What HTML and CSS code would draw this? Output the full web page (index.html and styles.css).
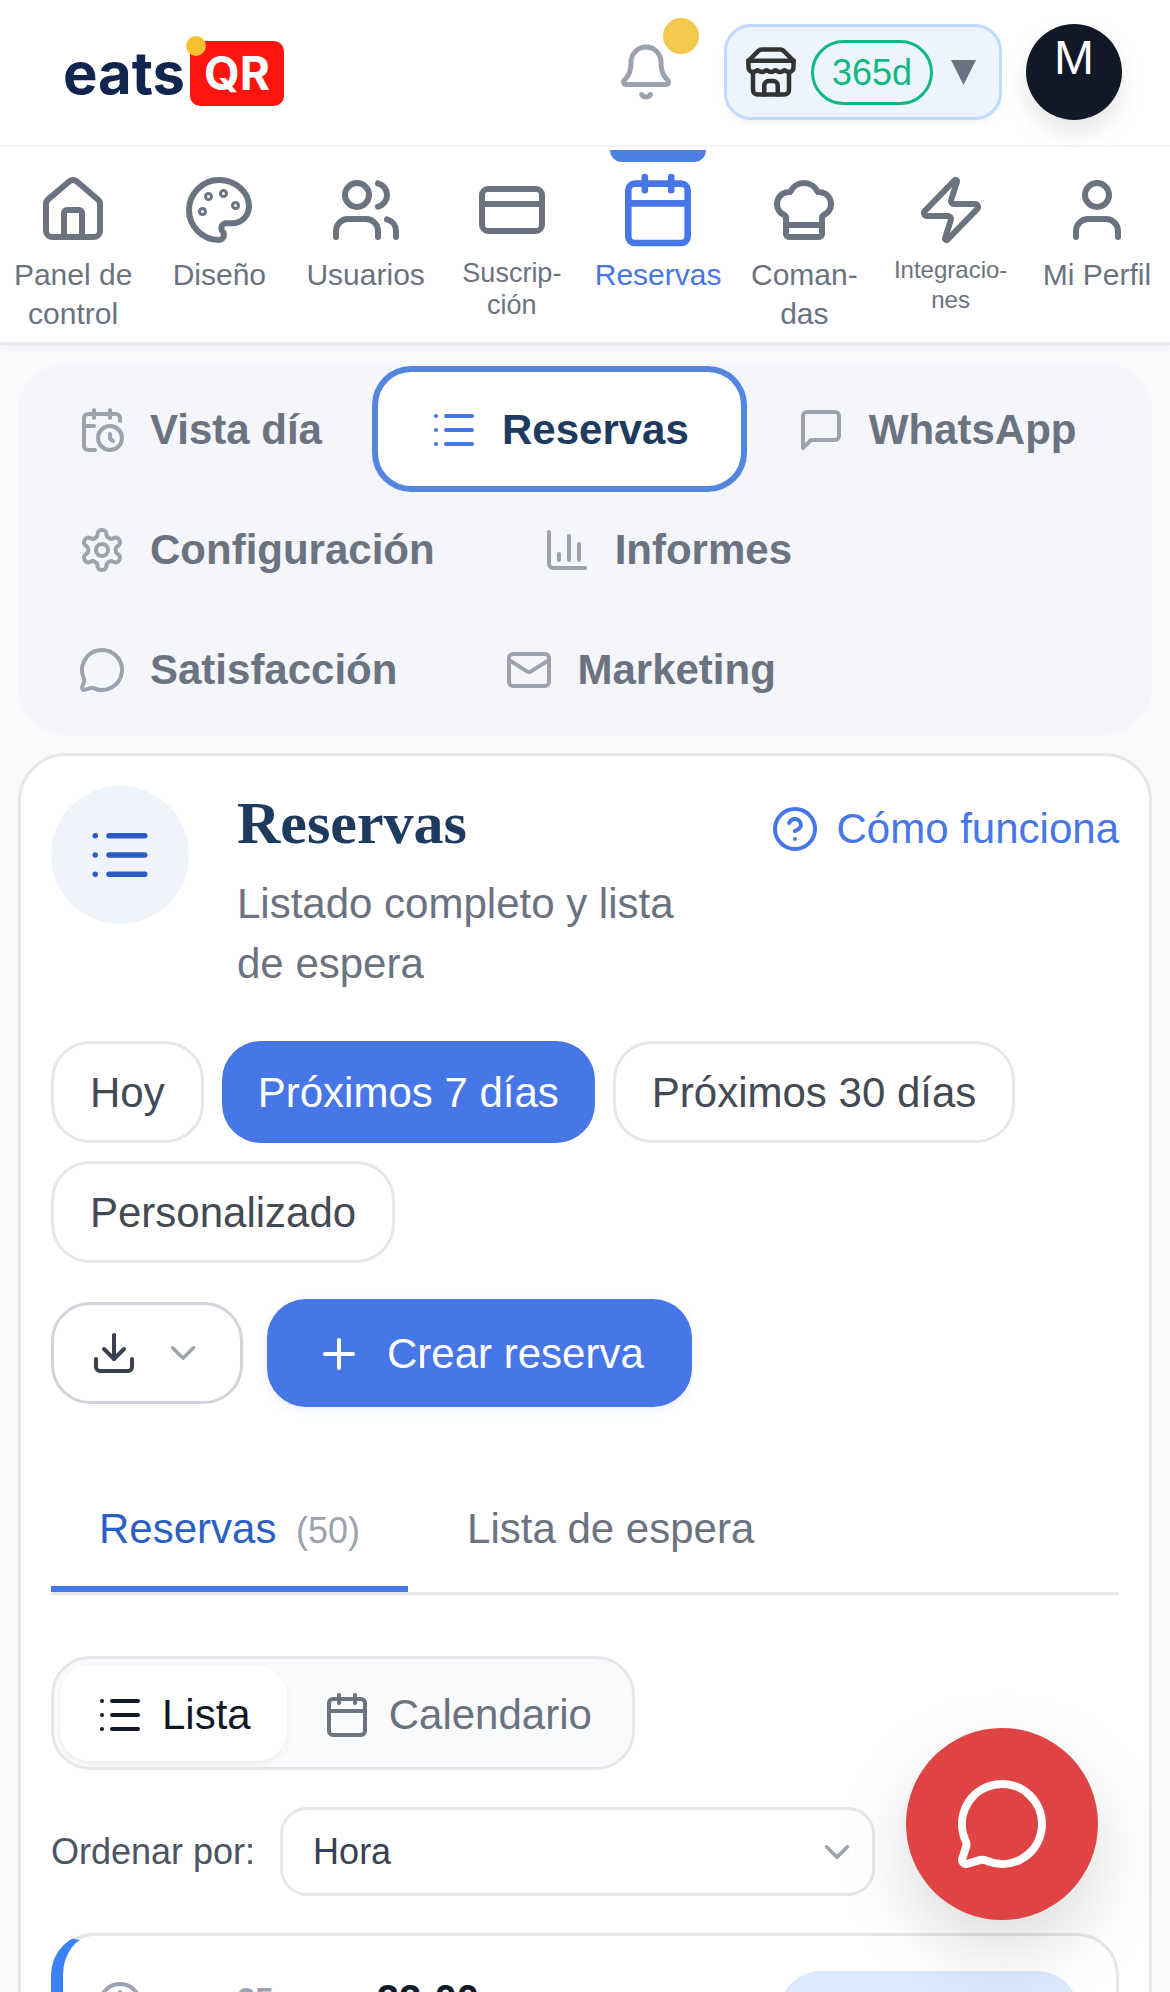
FILE: index.html
```html
<!DOCTYPE html>
<html lang="es">
<head>
  <meta charset="UTF-8">
  <title>Reservas - eatsQR</title>
  <link rel="stylesheet" href="styles.css">
</head>
<body>
  <header class="topbar">
    <div class="logo">
      <span class="logo-eats">eats</span>
      <span class="logo-qr">QR</span>
      <span class="logo-dot"></span>
    </div>
    <div class="topbar-right">
      <div class="bell">
        <svg class="ico" width="60" height="60" viewBox="0 0 24 24"><path d="M10.268 21a2 2 0 0 0 3.464 0"/><path d="M3.262 15.326A1 1 0 0 0 4 17h16a1 1 0 0 0 .74-1.673C19.41 13.956 18 12.499 18 8A6 6 0 0 0 6 8c0 4.499-1.411 5.956-2.738 7.326"/></svg>
        <span class="bell-dot"></span>
      </div>
      <div class="plan">
        <svg class="ico" width="54" height="54" viewBox="0 0 24 24"><path d="m2 7 4.41-4.41A2 2 0 0 1 7.83 2h8.34a2 2 0 0 1 1.42.59L22 7"/><path d="M4 12v8a2 2 0 0 0 2 2h12a2 2 0 0 0 2-2v-8"/><path d="M15 22v-4a2 2 0 0 0-2-2h-2a2 2 0 0 0-2 2v4"/><path d="M2 7h20"/><path d="M22 7v3a2 2 0 0 1-2 2a2.7 2.7 0 0 1-1.59-.63.7.7 0 0 0-.82 0A2.7 2.7 0 0 1 16 12a2.7 2.7 0 0 1-1.59-.63.7.7 0 0 0-.82 0A2.7 2.7 0 0 1 12 12a2.7 2.7 0 0 1-1.59-.63.7.7 0 0 0-.82 0A2.7 2.7 0 0 1 8 12a2.7 2.7 0 0 1-1.59-.63.7.7 0 0 0-.82 0A2.7 2.7 0 0 1 4 12a2 2 0 0 1-2-2V7"/></svg>
        <span class="plan-days">365d</span>
        <svg class="plan-arrow" width="25" height="25" viewBox="0 0 25 25"><polygon points="0,0 25,0 12.5,25"/></svg>
      </div>
      <div class="avatar">M</div>
    </div>
  </header>

  <nav class="mainnav">
    <a class="nav-item">
      <svg class="ico" width="72" height="72" viewBox="0 0 24 24"><path d="M15 21v-8a1 1 0 0 0-1-1h-4a1 1 0 0 0-1 1v8"/><path d="M3 10a2 2 0 0 1 .709-1.528l7-5.999a2 2 0 0 1 2.582 0l7 5.999A2 2 0 0 1 21 10v9a2 2 0 0 1-2 2H5a2 2 0 0 1-2-2z"/></svg>
      <span class="nav-label">Panel de control</span>
    </a>
    <a class="nav-item">
      <svg class="ico" width="72" height="72" viewBox="0 0 24 24"><path d="M12 2C6.5 2 2 6.5 2 12s4.5 10 10 10c.926 0 1.648-.746 1.648-1.688 0-.437-.18-.835-.437-1.125-.29-.289-.438-.652-.438-1.125a1.64 1.64 0 0 1 1.668-1.668h1.996c3.051 0 5.555-2.503 5.555-5.554C21.965 6.012 17.461 2 12 2z"/><circle cx="13.5" cy="6.5" r=".5"/><circle cx="17.5" cy="10.5" r=".5"/><circle cx="8.5" cy="7.5" r=".5"/><circle cx="6.5" cy="12.5" r=".5"/></svg>
      <span class="nav-label">Diseño</span>
    </a>
    <a class="nav-item">
      <svg class="ico" width="72" height="72" viewBox="0 0 24 24"><path d="M16 21v-2a4 4 0 0 0-4-4H6a4 4 0 0 0-4 4v2"/><circle cx="9" cy="7" r="4"/><path d="M22 21v-2a4 4 0 0 0-3-3.87"/><path d="M16 3.13a4 4 0 0 1 0 7.75"/></svg>
      <span class="nav-label">Usuarios</span>
    </a>
    <a class="nav-item">
      <svg class="ico" width="72" height="72" viewBox="0 0 24 24"><rect x="2" y="5" width="20" height="14" rx="2"/><path d="M2 10h20"/></svg>
      <span class="nav-label nav-label-sm">Suscrip-<br>ción</span>
    </a>
    <a class="nav-item active">
      <span class="nav-mark"></span>
      <svg class="ico" width="72" height="72" viewBox="0 0 24 24"><path d="M8 2v4"/><path d="M16 2v4"/><rect x="3" y="4" width="18" height="18" rx="2"/><path d="M3 10h18"/></svg>
      <span class="nav-label">Reservas</span>
    </a>
    <a class="nav-item">
      <svg class="ico" width="72" height="72" viewBox="0 0 24 24"><path d="M17 21a1 1 0 0 0 1-1v-5.35c0-.457.316-.844.727-1.041a4 4 0 0 0-2.134-7.589 5 5 0 0 0-9.186 0 4 4 0 0 0-2.134 7.588c.411.198.727.585.727 1.041V20a1 1 0 0 0 1 1Z"/><path d="M6 17h12"/></svg>
      <span class="nav-label">Coman-<br>das</span>
    </a>
    <a class="nav-item">
      <svg class="ico" width="72" height="72" viewBox="0 0 24 24"><path d="M4 14a1 1 0 0 1-.78-1.63l9.9-10.2a.5.5 0 0 1 .86.46l-1.92 6.02A1 1 0 0 0 13 10h7a1 1 0 0 1 .78 1.63l-9.9 10.2a.5.5 0 0 1-.86-.46l1.92-6.02A1 1 0 0 0 11 14z"/></svg>
      <span class="nav-label nav-label-xs">Integracio-<br>nes</span>
    </a>
    <a class="nav-item">
      <svg class="ico" width="72" height="72" viewBox="0 0 24 24"><path d="M19 21v-2a4 4 0 0 0-4-4H9a4 4 0 0 0-4 4v2"/><circle cx="12" cy="7" r="4"/></svg>
      <span class="nav-label">Mi Perfil</span>
    </a>
  </nav>

  <main class="content">
    <div class="section-tabs">
      <a class="section-tab">
        <svg class="ico-thin" width="48" height="48" viewBox="0 0 24 24"><path d="M21 7.5V6a2 2 0 0 0-2-2H5a2 2 0 0 0-2 2v14a2 2 0 0 0 2 2h3.5"/><path d="M16 2v4"/><path d="M8 2v4"/><path d="M3 10h5"/><path d="M17.5 17.5 16 16.3V14"/><circle cx="16" cy="16" r="6"/></svg>
        Vista día
      </a>
      <a class="section-tab active">
        <svg class="ico-thin" width="48" height="48" viewBox="0 0 24 24"><path d="M3 5h.01M3 12h.01M3 19h.01M8 5h13M8 12h13M8 19h13"/></svg>
        Reservas
      </a>
      <a class="section-tab">
        <svg class="ico-thin" width="48" height="48" viewBox="0 0 24 24"><path d="M21 15a2 2 0 0 1-2 2H7l-4 4V5a2 2 0 0 1 2-2h14a2 2 0 0 1 2 2z"/></svg>
        WhatsApp
      </a>
      <a class="section-tab">
        <svg class="ico-thin" width="48" height="48" viewBox="0 0 24 24"><path d="M12.22 2h-.44a2 2 0 0 0-2 2v.18a2 2 0 0 1-1 1.73l-.43.25a2 2 0 0 1-2 0l-.15-.08a2 2 0 0 0-2.73.73l-.22.38a2 2 0 0 0 .73 2.73l.15.1a2 2 0 0 1 1 1.72v.51a2 2 0 0 1-1 1.74l-.15.09a2 2 0 0 0-.73 2.73l.22.38a2 2 0 0 0 2.73.73l.15-.08a2 2 0 0 1 2 0l.43.25a2 2 0 0 1 1 1.73V20a2 2 0 0 0 2 2h.44a2 2 0 0 0 2-2v-.18a2 2 0 0 1 1-1.73l.43-.25a2 2 0 0 1 2 0l.15.08a2 2 0 0 0 2.73-.73l.22-.39a2 2 0 0 0-.73-2.73l-.15-.08a2 2 0 0 1-1-1.74v-.5a2 2 0 0 1 1-1.74l.15-.09a2 2 0 0 0 .73-2.73l-.22-.38a2 2 0 0 0-2.73-.73l-.15.08a2 2 0 0 1-2 0l-.43-.25a2 2 0 0 1-1-1.73V4a2 2 0 0 0-2-2z"/><circle cx="12" cy="12" r="3"/></svg>
        Configuración
      </a>
      <a class="section-tab">
        <svg class="ico-thin" width="48" height="48" viewBox="0 0 24 24"><path d="M3 3v16a2 2 0 0 0 2 2h16"/><path d="M18 17V9"/><path d="M13 17V5"/><path d="M8 17v-3"/></svg>
        Informes
      </a>
      <a class="section-tab">
        <svg class="ico-thin" width="48" height="48" viewBox="0 0 24 24"><path d="M2.992 16.342a2 2 0 0 1 .094 1.167l-1.065 3.29a1 1 0 0 0 1.236 1.168l3.413-.998a2 2 0 0 1 1.099.092 10 10 0 1 0-4.777-4.719"/></svg>
        Satisfacción
      </a>
      <a class="section-tab">
        <svg class="ico-thin" width="48" height="48" viewBox="0 0 24 24"><rect x="2" y="4" width="20" height="16" rx="2"/><path d="m22 7-8.97 5.7a1.94 1.94 0 0 1-2.06 0L2 7"/></svg>
        Marketing
      </a>
    </div>

    <section class="card">
      <div class="card-head">
        <div class="head-icon">
          <svg class="ico" width="66" height="66" viewBox="0 0 24 24"><path d="M3 5h.01M3 12h.01M3 19h.01M8 5h13M8 12h13M8 19h13"/></svg>
        </div>
        <div class="head-text">
          <h1>Reservas</h1>
          <p>Listado completo y lista de espera</p>
        </div>
        <a class="help-link">
          <svg class="ico" width="48" height="48" viewBox="0 0 24 24"><circle cx="12" cy="12" r="10"/><path d="M9.09 9a3 3 0 0 1 5.83 1c0 2-3 3-3 3"/><path d="M12 17h.01"/></svg>
          Cómo funciona
        </a>
      </div>

      <div class="chips">
        <button class="chip">Hoy</button>
        <button class="chip active">Próximos 7 días</button>
        <button class="chip">Próximos 30 días</button>
        <button class="chip">Personalizado</button>
      </div>

      <div class="actions">
        <button class="export-btn">
          <svg class="ico" width="48" height="48" viewBox="0 0 24 24"><path d="M12 15V3"/><path d="M21 15v4a2 2 0 0 1-2 2H5a2 2 0 0 1-2-2v-4"/><path d="m7 10 5 5 5-5"/></svg>
          <svg class="ico chevron" width="42" height="42" viewBox="0 0 24 24"><path d="m6 9 6 6 6-6"/></svg>
        </button>
        <button class="create-btn">
          <svg class="ico" width="48" height="48" viewBox="0 0 24 24"><path d="M5 12h14"/><path d="M12 5v14"/></svg>
          Crear reserva
        </button>
      </div>

      <div class="list-tabs">
        <a class="list-tab active">Reservas <span class="count">(50)</span></a>
        <a class="list-tab">Lista de espera</a>
      </div>

      <div class="view-toggle">
        <a class="view-btn active">
          <svg class="ico" width="48" height="48" viewBox="0 0 24 24"><path d="M3 5h.01M3 12h.01M3 19h.01M8 5h13M8 12h13M8 19h13"/></svg>
          Lista
        </a>
        <a class="view-btn">
          <svg class="ico" width="48" height="48" viewBox="0 0 24 24"><path d="M8 2v4"/><path d="M16 2v4"/><rect x="3" y="4" width="18" height="18" rx="2"/><path d="M3 10h18"/></svg>
          Calendario
        </a>
      </div>

      <div class="sort-row">
        <label>Ordenar por:</label>
        <div class="select">
          Hora
          <svg class="ico chevron" width="42" height="42" viewBox="0 0 24 24"><path d="m6 9 6 6 6-6"/></svg>
        </div>
      </div>

      <article class="booking">
        <svg class="ico-thin booking-clock" width="48" height="48" viewBox="0 0 24 24"><circle cx="12" cy="12" r="10"/><path d="M12 6v6l4 2"/></svg>
        <span class="booking-day">25</span>
        <span class="booking-time">22:00</span>
        <span class="booking-status"></span>
      </article>
    </section>
  </main>

  <button class="fab">
    <svg class="ico" width="96" height="96" viewBox="0 0 24 24"><path d="M2.992 16.342a2 2 0 0 1 .094 1.167l-1.065 3.29a1 1 0 0 0 1.236 1.168l3.413-.998a2 2 0 0 1 1.099.092 10 10 0 1 0-4.777-4.719"/></svg>
  </button>
</body>
</html>
```

FILE: styles.css
```css
* {
  box-sizing: border-box;
}
html, body {
  height: 1992px;
  overflow: hidden;
}
body {
  position: relative;
  margin: 0;
  font-family: "Liberation Sans", Arial, sans-serif;
  background: #f8fafc;
  color: #374151;
}
button {
  font-family: inherit;
  cursor: pointer;
}
.ico, .ico-thin {
  display: block;
  flex-shrink: 0;
  fill: none;
  stroke: currentColor;
  stroke-width: 2;
  stroke-linecap: round;
  stroke-linejoin: round;
}
.ico-thin {
  color: #9ca3af;
}

/* top bar */
.topbar {
  display: flex;
  align-items: center;
  justify-content: space-between;
  height: 147px;
  padding: 0 48px 1px 63px;
  background: #fff;
  border-bottom: 2px solid #f3f4f6;
}
.logo {
  position: relative;
  display: flex;
  align-items: center;
  gap: 5px;
  margin-top: 3px;
}
.logo-eats {
  font-family: Inter, sans-serif;
  font-size: 58px;
  font-weight: 700;
  line-height: 65px;
  color: #10264f;
}
.logo-qr {
  width: 94px;
  height: 65px;
  border-radius: 10px;
  background: #ff1510;
  color: #fff;
  font-family: Inter, sans-serif;
  font-size: 46px;
  font-weight: 700;
  line-height: 65px;
  text-align: center;
}
.logo-dot {
  position: absolute;
  left: 123px;
  top: -5px;
  width: 20px;
  height: 20px;
  border-radius: 50%;
  background: #f9c033;
}
.topbar-right {
  display: flex;
  align-items: center;
  gap: 24px;
}
.bell {
  position: relative;
  margin-right: 24px;
  color: #9ca3af;
}
.bell-dot {
  position: absolute;
  left: 47px;
  top: -24px;
  width: 36px;
  height: 36px;
  border-radius: 50%;
  background: #f2c94c;
}
.plan {
  display: flex;
  align-items: center;
  width: 278px;
  height: 96px;
  padding-left: 17px;
  border: 3px solid #bfdbfe;
  border-radius: 27px;
  background: #eef4fe;
  color: #333;
  box-shadow: 0 3px 6px rgba(0, 0, 0, 0.05);
}
.plan-days {
  width: 122px;
  height: 65px;
  margin: 0 18px 0 13px;
  border: 3px solid #10b981;
  border-radius: 33px;
  color: #10b981;
  font-size: 36px;
  line-height: 59px;
  text-align: center;
}
.plan-arrow {
  fill: #6b7280;
}
.avatar {
  display: flex;
  justify-content: center;
  width: 96px;
  height: 96px;
  border-radius: 50%;
  background: #111827;
  color: #fff;
  font-size: 48px;
  line-height: 68px;
  box-shadow: 0 12px 24px rgba(0, 0, 0, 0.1);
}

/* main navigation */
.mainnav {
  position: relative;
  display: flex;
  height: 198px;
  padding-top: 27px;
  background: #fff;
  border-bottom: 3px solid #e8eaed;
  box-shadow: 0 3px 6px rgba(0, 0, 0, 0.04);
}
.nav-item {
  flex: 1;
  display: flex;
  flex-direction: column;
  align-items: center;
  position: relative;
  color: #6b7280;
  text-align: center;
}
.nav-label {
  margin-top: 9px;
  font-size: 30px;
  line-height: 39px;
}
.nav-label-sm {
  margin-top: 11px;
  font-size: 27px;
  line-height: 32px;
}
.nav-label-xs {
  margin-top: 9px;
  font-size: 24px;
  line-height: 30px;
}
.nav-item.active {
  color: #4776e6;
}
.nav-item.active .ico {
  transform: scale(1.1);
}
.nav-mark {
  position: absolute;
  top: -24px;
  left: 25px;
  width: 96px;
  height: 12px;
  border-radius: 0 0 12px 12px;
  background: #4f81e3;
}

/* section tabs */
.content {
  padding: 19px 18px 18px;
}
.section-tabs {
  display: flex;
  flex-wrap: wrap;
  gap: 6px 4px;
  height: 371px;
  padding: 8px 0 9px 8px;
  border-radius: 48px;
  background: #f4f6fb;
}
.section-tab {
  display: flex;
  align-items: center;
  gap: 24px;
  height: 114px;
  padding: 2px 52px 0;
  border-radius: 33px;
  color: #6b7280;
  font-size: 42px;
  font-weight: 700;
}
.section-tab.active {
  background: #fff;
  color: #1e3a5f;
  box-shadow: 0 0 0 6px #5486e0;
}
.section-tab.active .ico-thin {
  color: #4776e6;
}

/* main card */
.card {
  margin-top: 18px;
  height: 1400px;
  padding: 30px;
  border: 3px solid #e5e7eb;
  border-radius: 48px;
  background: #fff;
}
.card-head {
  display: flex;
  gap: 48px;
}
.head-icon {
  display: flex;
  align-items: center;
  justify-content: center;
  flex-shrink: 0;
  width: 138px;
  height: 138px;
  border-radius: 50%;
  background: #eff4fb;
  color: #2d5bc4;
}
.head-text {
  flex: 1;
}
.head-text h1 {
  margin: 0;
  font-family: "Liberation Serif", "Times New Roman", serif;
  font-size: 60px;
  font-weight: 700;
  line-height: 75px;
  color: #1e3a5f;
}
.head-text p {
  margin: 13px 0 0;
  font-size: 42px;
  line-height: 60px;
  color: #6b7280;
}
.help-link {
  display: flex;
  align-items: center;
  align-self: flex-start;
  gap: 18px;
  height: 86px;
  color: #4776e6;
  font-size: 42px;
}

/* filters */
.chips {
  display: flex;
  flex-wrap: wrap;
  gap: 18px;
  margin-top: 47px;
}
.chip {
  height: 102px;
  padding: 2px 36px 0;
  border: 3px solid #e5e7eb;
  border-radius: 39px;
  background: #fff;
  color: #434a54;
  font-size: 42px;
}
.chip.active {
  border: 0;
  background: #4776e6;
  color: #fff;
}
.actions {
  display: flex;
  align-items: center;
  gap: 24px;
  margin-top: 36px;
}
.export-btn {
  display: flex;
  align-items: center;
  gap: 24px;
  height: 102px;
  padding: 0 36px;
  border: 3px solid #d1d5db;
  border-radius: 39px;
  background: #fff;
  color: #374151;
}
.chevron {
  color: #9ca3af;
}
.create-btn {
  display: flex;
  align-items: center;
  gap: 24px;
  height: 108px;
  padding: 2px 48px 0;
  border: 0;
  border-radius: 39px;
  background: #4776e6;
  color: #fff;
  font-size: 42px;
  box-shadow: 0 3px 9px rgba(71, 118, 230, 0.12);
}

/* list tabs */
.list-tabs {
  display: flex;
  gap: 11px;
  margin-top: 53px;
  border-bottom: 3px solid #e5e7eb;
}
.list-tab {
  padding: 37px 48px 24px;
  color: #6b7280;
  font-size: 42px;
  line-height: 63px;
  border-bottom: 6px solid transparent;
}
.list-tab.active {
  color: #2b5fc4;
  border-bottom-color: #4776e6;
}
.count {
  margin-left: 8px;
  color: #9ca3af;
  font-size: 36px;
}

/* list or calendar */
.view-toggle {
  display: inline-flex;
  margin-top: 61px;
  padding: 6px 4px 6px 6px;
  border: 3px solid #e5e7eb;
  border-radius: 39px;
  background: #f8fafc;
}
.view-btn {
  display: flex;
  align-items: center;
  gap: 18px;
  height: 96px;
  padding: 3px 36px 0;
  border-radius: 30px;
  color: #6b7280;
  font-size: 42px;
}
.view-btn.active {
  background: #fff;
  color: #111827;
  box-shadow: 0 3px 6px rgba(0, 0, 0, 0.05);
}
.sort-row {
  display: flex;
  align-items: center;
  gap: 25px;
  width: 824px;
  margin-top: 37px;
  color: #4b5563;
  font-size: 36px;
}
.select {
  flex: 1;
  display: flex;
  align-items: center;
  justify-content: space-between;
  height: 89px;
  padding: 0 14px 0 30px;
  border: 3px solid #e5e7eb;
  border-radius: 27px;
  background: #fff;
  color: #374151;
}

/* first booking, cut by the window */
.booking {
  display: flex;
  align-items: flex-start;
  margin-top: 37px;
  height: 300px;
  padding: 35px 37px 0 33px;
  border: 3px solid #e5e7eb;
  border-left: 12px solid #3b82f6;
  border-radius: 42px;
  background: #fff;
}
.booking-clock {
  margin-top: 9px;
}
.booking-day {
  margin: 10px 0 0 93px;
  color: #9ca3af;
  font-size: 33px;
  font-weight: 700;
}
.booking-time {
  margin: 6px 0 0 103px;
  color: #111827;
  font-size: 40px;
  font-weight: 700;
}
.booking-status {
  width: 300px;
  height: 120px;
  margin-left: auto;
  border-radius: 42px;
  background: #dbeafe;
}

/* chat button */
.fab {
  position: absolute;
  left: 906px;
  top: 1728px;
  display: flex;
  align-items: center;
  justify-content: center;
  width: 192px;
  height: 192px;
  border: 0;
  border-radius: 50%;
  background: #e04343;
  color: #fff;
  box-shadow: 0 30px 75px rgba(0, 0, 0, 0.14);
}
```
